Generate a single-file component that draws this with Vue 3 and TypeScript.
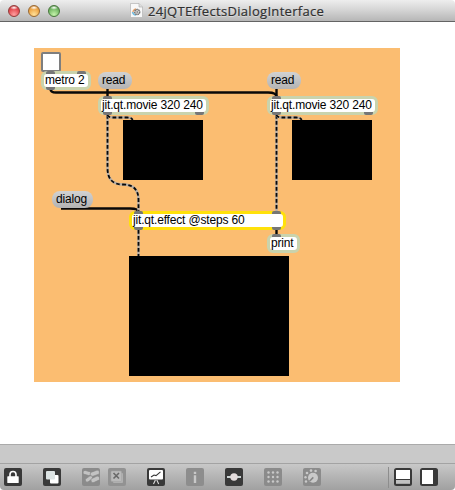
<script setup lang="ts">
interface PatchBox {
  id: string
  kind: 'object' | 'message' | 'display' | 'toggle'
  x: number
  y: number
  w: number
  h: number
  text?: string
  selected?: boolean
  inlets?: number[]
  outlets?: number[]
}

const boxes: PatchBox[] = [
  { id: 'toggle', kind: 'toggle', x: 41, y: 52, w: 20, h: 20 },
  { id: 'metro', kind: 'object', x: 41, y: 71, w: 50, h: 19, text: 'metro 2', inlets: [5, 36], outlets: [5] },
  { id: 'read-a', kind: 'message', x: 98, y: 72, w: 34, h: 17, text: 'read' },
  { id: 'read-b', kind: 'message', x: 267, y: 72, w: 34, h: 17, text: 'read' },
  { id: 'movie-a', kind: 'object', x: 98, y: 96, w: 111, h: 19, text: 'jit.qt.movie 320 240', inlets: [5], outlets: [5, 97] },
  { id: 'movie-b', kind: 'object', x: 267, y: 96, w: 111, h: 19, text: 'jit.qt.movie 320 240', inlets: [5], outlets: [5, 97] },
  { id: 'view-a', kind: 'display', x: 123, y: 120, w: 80, h: 60 },
  { id: 'view-b', kind: 'display', x: 292, y: 120, w: 80, h: 60 },
  { id: 'dialog', kind: 'message', x: 52, y: 191, w: 41, h: 17, text: 'dialog' },
  { id: 'effect', kind: 'object', x: 129, y: 211, w: 157, h: 19, text: 'jit.qt.effect @steps 60', selected: true, inlets: [5, 143], outlets: [5, 143] },
  { id: 'print', kind: 'object', x: 267, y: 234, w: 33, h: 19, text: 'print', inlets: [5] },
  { id: 'view-out', kind: 'display', x: 129, y: 256, w: 160, h: 120 },
]

const originX = 34
const originY = 48

const place = (b: PatchBox) => ({
  left: `${b.x - originX}px`,
  top: `${b.y - originY}px`,
  width: `${b.w}px`,
  height: `${b.h}px`,
})

const controlCords = [
  'M50.5 89 Q50.5 92.5 56 92.5 H268 Q276.5 92.5 276.5 97',
  'M107.5 89 V97',
  'M276.5 89 V97',
  'M61 208.5 H130 Q138.5 208.5 138.5 212',
  'M276.5 229 V235',
]

const matrixCords = [
  'M107.5 115 V168 Q107.5 184.5 123 184.5 Q138.5 184.5 138.5 200 V212',
  'M107.5 115 Q108 117.5 113 117.5 H127 Q132 117.5 132.5 120',
  'M276.5 115 V212',
  'M276.5 115 Q277 117.5 282 117.5 H296 Q301 117.5 301.5 120',
  'M138.5 230 V256',
]
</script>

<template>
  <div class="window">
    <header class="titlebar">
      <div class="lights">
        <span class="light red"></span>
        <span class="light amber"></span>
        <span class="light green"></span>
      </div>
      <div class="title">
        <svg class="doc" width="13" height="15" viewBox="0 0 13 15">
          <path d="M.5 .5H9L12.5 4V14.5H.5Z" fill="#f8f8f8" stroke="#b5b5b5" stroke-width=".7" />
          <path d="M9 .5V4H12.5" fill="#ddd" stroke="#aaa" stroke-width=".6" />
          <path d="M6 6A3.2 3.2 0 0 0 3 9.5" fill="none" stroke="#e9a066" stroke-width="1.4" />
          <path d="M2.6 9A3.5 3.5 0 0 0 6 12" fill="none" stroke="#73bde0" stroke-width="1.6" />
          <circle cx="7.2" cy="9" r="2.5" fill="#ddd" stroke="#777" stroke-width="1.5" stroke-dasharray="1.6 .5" />
          <circle cx="7.2" cy="9" r=".8" fill="#666" />
        </svg>
        <span class="name">24jQTEffectsDialogInterface</span>
      </div>
    </header>

    <main class="workspace">
      <div class="patch">
        <svg class="cords" width="366" height="334" viewBox="34 48 366 334">
          <path v-for="d in controlCords" :key="d" :d="d" class="control" />
          <g v-for="d in matrixCords" :key="d">
            <path :d="d" class="matrix-base" />
            <path :d="d" class="matrix" />
          </g>
        </svg>
        <div
          v-for="b in boxes"
          :key="b.id"
          class="box"
          :class="[b.kind, { selected: b.selected }]"
          :style="place(b)"
        >
          <span v-if="b.text" class="label">{{ b.text }}</span>
          <i v-for="x in b.inlets" :key="'in' + x" class="port inlet" :style="{ left: x + 'px' }"></i>
          <i v-for="x in b.outlets" :key="'out' + x" class="port outlet" :style="{ left: x + 'px' }"></i>
        </div>
      </div>
    </main>

    <div class="status"></div>

    <footer class="toolbar">
      <svg class="tool lock" viewBox="0 0 18 18">
        <rect width="18" height="18" rx="2" fill="#393939" />
        <path d="M6 9V6.5a3 3 0 0 1 6 0V9" fill="none" stroke="#fff" stroke-width="1.6" />
        <rect x="3.3" y="8.3" width="11.4" height="6.7" rx=".6" fill="#fff" />
      </svg>
      <svg class="tool layers" viewBox="0 0 18 18">
        <rect width="18" height="18" rx="2" fill="#393939" />
        <rect x="7" y="7" width="8.5" height="8.5" rx="1" fill="#fff" />
        <rect x="3" y="3" width="9" height="8.5" rx="1" fill="#dce3e3" />
      </svg>
      <svg class="tool objects" viewBox="0 0 18 18">
        <rect width="18" height="18" rx="2" fill="#8b8b8b" />
        <g fill="#c3c3c3" stroke="#858585" stroke-width=".6">
          <rect x="1" y="3" width="8" height="4" rx="1.8" transform="rotate(15 5 5)" />
          <rect x="8" y="3" width="9.5" height="4.4" rx="2" transform="rotate(-20 13 5)" />
          <rect x="3" y="9" width="8" height="3.8" rx="1.8" transform="rotate(-35 7 11)" />
          <rect x="9" y="9.3" width="9" height="4.5" rx="2" transform="rotate(-25 13 12)" />
        </g>
      </svg>
      <svg class="tool close" viewBox="0 0 18 18">
        <rect width="18" height="18" rx="2" fill="#929292" />
        <rect x="5" y="5" width="10" height="10" rx="1" fill="#b0b0b0" />
        <rect x="3" y="3" width="10.5" height="10.5" rx="1" fill="#bababa" stroke="#a3a3a3" stroke-width=".5" />
        <path d="M5.5 5L11 10.5M11 5L5.5 10.5" stroke="#686868" stroke-width="1.6" />
      </svg>
      <svg class="tool present" viewBox="0 0 18 18">
        <rect width="18" height="18" rx="2" fill="#393939" />
        <rect x="2" y="2" width="14" height="9.5" rx="1" fill="#fff" />
        <path d="M4 9L7 7L9 7.6L13.5 3.8" fill="none" stroke="#333" stroke-width="1.1" />
        <path d="M8.4 12L6.5 16M9.8 12L11.7 16" stroke="#ddd" stroke-width="1.1" />
      </svg>
      <svg class="tool info" viewBox="0 0 18 18">
        <rect width="18" height="18" rx="2" fill="#8d8d8d" />
        <path d="M7.8 3.8h2.4v2.3H7.8zM7.8 7.2h2.4V15H7.8z" fill="#c8c8c8" />
      </svg>
      <svg class="tool slider" viewBox="0 0 18 18">
        <rect width="18" height="18" rx="2" fill="#393939" />
        <path d="M2 9H16" stroke="#ccd4d4" stroke-width="2" />
        <circle cx="9" cy="9" r="3.7" fill="#e4dcdc" />
      </svg>
      <svg class="tool grid" viewBox="0 0 18 18">
        <rect width="18" height="18" rx="2" fill="#8b8b8b" />
        <g fill="#c9c9c9">
          <template v-for="r in 3" :key="r">
            <circle v-for="c in 3" :key="c" :cx="c * 4.5" :cy="r * 4.5" r="1.2" />
          </template>
        </g>
      </svg>
      <svg class="tool dial" viewBox="0 0 18 18">
        <rect width="18" height="18" rx="2" fill="#8b8b8b" />
        <g fill="#cacaca">
          <circle cx="10" cy="9.7" r="5" />
          <circle cx="3" cy="13.5" r="1.2" />
          <circle cx="2.5" cy="9.3" r="1.2" />
          <circle cx="4" cy="5" r="1.3" />
          <circle cx="8" cy="2.6" r="1.3" />
          <circle cx="12.6" cy="3" r="1.3" />
        </g>
        <path d="M6.5 13.2L10.3 9.4" stroke="#858585" stroke-width="1.5" />
      </svg>
      <span class="divider"></span>
      <svg class="tool bottom-pane" viewBox="0 0 18 18">
        <rect width="18" height="18" rx="2.5" fill="#393939" />
        <rect x="2" y="2" width="14" height="9" fill="#fff" />
        <rect x="2" y="12" width="14" height="3.8" fill="#c2c2c2" />
      </svg>
      <svg class="tool side-pane" viewBox="0 0 18 18">
        <rect width="18" height="18" rx="2.5" fill="#393939" />
        <rect x="2" y="2" width="11" height="14" fill="#fff" />
      </svg>
    </footer>
  </div>
</template>

<style>
body {
  background: #fff;
}
</style>

<style scoped>
.window {
  width: 455px;
  height: 490px;
  display: flex;
  flex-direction: column;
  overflow: hidden;
  background: #fff;
  font-family: 'Liberation Sans', Arial, sans-serif;
}
.titlebar {
  box-sizing: border-box;
  height: 22px;
  flex: none;
  display: flex;
  align-items: center;
  padding-left: 8px;
  border-bottom: 1px solid #646464;
  border-radius: 4px 4px 0 0;
  background: linear-gradient(#eeeeee, #d9d9d9 40%, #b6b6b6);
}
.lights {
  display: flex;
  gap: 8px;
}
.light {
  box-sizing: border-box;
  width: 12px;
  height: 12px;
  border-radius: 50%;
  border: 1px solid;
}
.red {
  border-color: #923b39;
  background: radial-gradient(ellipse 4px 2px at 50% 17%, #fff, transparent), radial-gradient(circle at 50% 85%, #ffa0a0, #e44b50 60%, #bb3436);
}
.amber {
  border-color: #986832;
  background: radial-gradient(ellipse 4px 2px at 50% 17%, #fff, transparent), radial-gradient(circle at 50% 85%, #ffe19a, #efa646 60%, #c57d2c);
}
.green {
  border-color: #47763b;
  background: radial-gradient(ellipse 4px 2px at 50% 17%, #fff, transparent), radial-gradient(circle at 50% 85%, #c5f3ab, #75b966 60%, #4d8c43);
}
.title {
  display: flex;
  align-items: center;
  gap: 5px;
  margin-left: 70px;
}
.doc {
  display: block;
}
.name {
  font: 13px/16px 'Open Sans', 'Noto Sans', sans-serif;
  letter-spacing: 0.31px;
  color: #303030;
  -webkit-text-stroke: 0.2px #303030;
  text-shadow: 0 1px 0 rgba(255, 255, 255, 0.4);
  white-space: nowrap;
}
.workspace {
  height: 422px;
  flex: none;
  box-sizing: border-box;
  padding: 26px 0 0 34px;
}
.patch {
  position: relative;
  width: 366px;
  height: 334px;
  background: #fbbd71;
}
.cords {
  position: absolute;
  inset: 0;
  z-index: 1;
  fill: none;
}
.control {
  stroke: #080808;
  stroke-width: 2.4;
}
.matrix-base {
  stroke: #b4ada6;
  stroke-width: 2.4;
}
.matrix {
  stroke: #080808;
  stroke-width: 1.8;
  stroke-dasharray: 3.7 2.3;
}
.box {
  position: absolute;
  box-sizing: border-box;
  z-index: 2;
  display: flex;
  align-items: center;
  font-size: 12px;
  letter-spacing: -0.17px;
  line-height: 13px;
  color: #000;
  white-space: nowrap;
}
.object {
  padding-left: 1px;
  border: 3px solid #c9d3ad;
  border-radius: 6px;
  background: #fff;
}
.object.selected {
  border-color: #ffe10a;
}
.message {
  padding-left: 4px;
  border-radius: 8px;
  background: linear-gradient(#d2d2d2, #b3b3b3);
}
.display {
  background: #000;
}
.toggle {
  border: 2px solid #7e7e7e;
  border-radius: 2px;
  background: #fff;
}
.port {
  position: absolute;
  width: 9px;
  height: 3px;
  margin-left: -3px;
  background: #767676;
}
.inlet {
  top: -3px;
  border-radius: 2px 2px 0 0;
}
.outlet {
  bottom: -3px;
  border-radius: 0 0 2px 2px;
}
.status {
  height: 19px;
  flex: none;
  box-sizing: border-box;
  border-top: 1px solid #aaa;
  background: #c9c9c9;
}
.toolbar {
  height: 27px;
  flex: none;
  box-sizing: border-box;
  display: flex;
  align-items: center;
  padding: 0 0 0 4px;
  border-top: 1px solid #a3a3a3;
  border-radius: 0 0 4px 4px;
  background: linear-gradient(#c8c8c8, #a0a0a0);
}
.tool {
  width: 18px;
  height: 18px;
  flex: none;
  margin-right: 21px;
}
.objects,
.side-pane,
.bottom-pane {
  margin-right: 8px;
}
.dial {
  margin-right: 67px;
}
.divider {
  width: 1px;
  height: 21px;
  margin-right: 5px;
  background: #8d8d8d;
}
</style>
